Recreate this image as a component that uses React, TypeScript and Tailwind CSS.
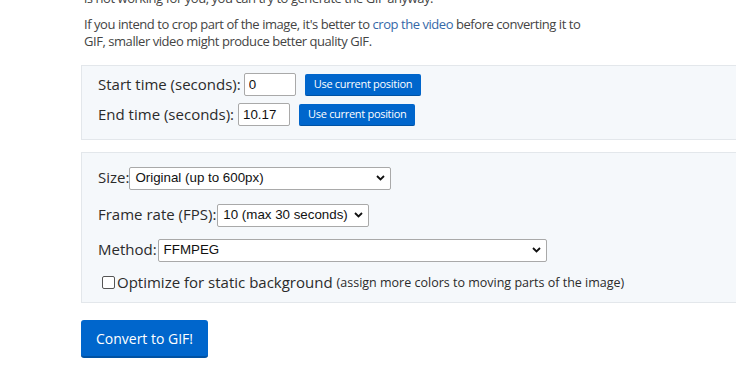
import { useState } from 'react';

const sans = "font-['Open_Sans',_'Noto_Sans',_sans-serif]";
const arial = "font-['Liberation_Sans',_Arial,_sans-serif]";

function Chevron() {
  return (
    <svg width="9" height="6" viewBox="0 0 9 6" className="pointer-events-none absolute right-[6px] top-1/2 -translate-y-1/2">
      <path d="M1 1l3.5 3.5L8 1" fill="none" stroke="#111" strokeWidth="1.8" />
    </svg>
  );
}

function Select({ width, options, value }: { width: string; options: string[]; value: string }) {
  const [v, setV] = useState(value);
  return (
    <span className={`relative inline-block ${width}`}>
      <select
        value={v}
        onChange={(e) => setV(e.target.value)}
        className={`${arial} w-full h-[23px] appearance-none bg-white border border-[#a9a9a9] rounded-[2px] pl-[5px] pr-[20px] text-[13.33px] text-[#111] outline-none`}
      >
        {options.map((o) => (
          <option key={o}>{o}</option>
        ))}
      </select>
      <Chevron />
    </span>
  );
}

function SmallButton() {
  return (
    <button className={`${sans} h-[22px] px-[9px] bg-[#0066cc] border-b border-[#0052a3] rounded-[2px] text-white text-[11px] tracking-[-0.3px]`}>
      Use current position
    </button>
  );
}

export default function App() {
  const [start, setStart] = useState('0');
  const [end, setEnd] = useState('10.17');
  const [optimize, setOptimize] = useState(false);

  return (
    <div className="w-[736px] h-[385px] overflow-hidden bg-white">
      <div className="ml-[81px] w-[760px]">
        <div className={`${sans} text-[13px] tracking-[-0.45px] leading-[17px] text-[#444] pl-[3px] w-[560px]`}>
          <p className="-mt-[10px]">is not working for you, you can try to generate the GIF anyway.</p>
          <p className="mt-[9px]">
            If you intend to crop part of the image, it's better to <span className="text-[#3568a8]">crop the video</span> before converting it to
            <br />
            GIF, smaller video might produce better quality GIF.
          </p>
        </div>

        <div className={`${sans} mt-[15px] bg-[#f5f8fb] border border-[#e3e7eb] pl-[16px] pt-[3px] pb-[10px] text-[15px] text-[#2b2b2b]`}>
          <div className="flex items-center h-[30px]">
            <span>Start time (seconds):</span>
            <input
              value={start}
              onChange={(e) => setStart(e.target.value)}
              className={`${arial} ml-[3px] w-[52px] h-[23px] bg-white border border-[#a9a9a9] rounded-[2px] px-[4px] text-[13.33px] text-[#111] outline-none`}
            />
            <span className="ml-[9px] mt-[2px] flex">
              <SmallButton />
            </span>
          </div>
          <div className="flex items-center h-[30px]">
            <span>End time (seconds):</span>
            <input
              value={end}
              onChange={(e) => setEnd(e.target.value)}
              className={`${arial} ml-[4px] w-[52px] h-[23px] bg-white border border-[#a9a9a9] rounded-[2px] px-[4px] text-[13.33px] text-[#111] outline-none`}
            />
            <span className="ml-[9px] mt-[2px] flex">
              <SmallButton />
            </span>
          </div>
        </div>

        <div className={`${sans} mt-[12px] bg-[#f5f8fb] border border-[#e3e7eb] pl-[16px] pt-[13px] pb-[8px] text-[15px] text-[#2b2b2b]`}>
          <div className="flex items-center h-[23px]">
            <span>Size:</span>
            <Select width="w-[262px]" value="Original (up to 600px)" options={['Original (up to 600px)', '480px', '320px']} />
          </div>
          <div className="flex items-center h-[23px] mt-[14px]">
            <span>Frame rate (FPS):</span>
            <span className="ml-[1px] flex">
              <Select width="w-[152px]" value="10 (max 30 seconds)" options={['10 (max 30 seconds)', '20 (max 15 seconds)', '5 (max 60 seconds)']} />
            </span>
          </div>
          <div className="flex items-center h-[23px] mt-[12px]">
            <span>Method:</span>
            <span className="ml-[1px] flex">
              <Select width="w-[389px]" value="FFMPEG" options={['FFMPEG', 'ImageMagick', 'Gifsicle']} />
            </span>
          </div>
          <label className="flex items-center h-[23px] mt-[10px] pl-[4px]">
            <input
              type="checkbox"
              checked={optimize}
              onChange={(e) => setOptimize(e.target.checked)}
              className="appearance-none w-[13px] h-[13px] border border-[#555] rounded-[2px] bg-white m-0"
            />
            <span className="ml-[2px]">Optimize for static background</span>
            <span className="ml-[4px] text-[12.5px] mt-[2px]">(assign more colors to moving parts of the image)</span>
          </label>
        </div>

        <button className={`${sans} mt-[17px] w-[127px] h-[38px] bg-[#0066cc] border-b-2 border-[#0052a3] rounded-[3px] text-white text-[14px]`}>
          Convert to GIF!
        </button>
      </div>
    </div>
  );
}
